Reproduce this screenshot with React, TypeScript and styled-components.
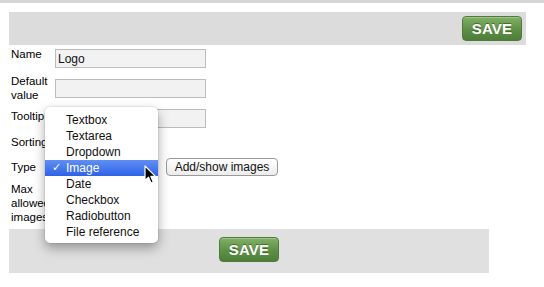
import React from "react";
import styled, {createGlobalStyle} from "styled-components";

const GlobalStyle = createGlobalStyle`
  body {
    margin: 0;
    background: #fff;
    font-family: "Liberation Sans", Arial, sans-serif;
    color: #111;
  }
`

const Page = styled.div`
  width: 544px;
  height: 287px;
  overflow: hidden;
`

const TopStrip = styled.div`
  height: 3px;
  background: #d6d6d6;
`

const Panel = styled.div<{ $width: number, $height: number, $justify: string, $bg: string }>`
  display: flex;
  align-items: center;
  justify-content: ${({$justify}) => $justify};
  box-sizing: border-box;
  margin-left: 9px;
  width: ${({$width}) => $width}px;
  height: ${({$height}) => $height}px;
  background: ${({$bg}) => $bg};
`

const TopPanel = styled(Panel)`
  margin-top: 9px;
  padding-right: 4px;
`

const BottomPanel = styled(Panel)`
  margin-top: 5px;
  align-items: flex-start;
  padding-top: 8px;
`

const SaveButton = styled.button`
  width: 60px;
  height: 25px;
  padding: 0;
  border: 1px solid #4f7a3c;
  border-radius: 4px;
  background: linear-gradient(#82b067, #5d9045 55%, #4e7e39);
  box-shadow: inset 0 1px 0 rgba(255, 255, 255, 0.25);
  color: #fff;
  font-family: "Liberation Sans", Arial, sans-serif;
  font-weight: bold;
  font-size: 15px;
  letter-spacing: 0.2px;
  text-shadow: 0 -1px 0 rgba(0, 0, 0, 0.35);
  cursor: pointer;
`

const Form = styled.div`
  padding: 2px 0 0 11px;
`

const Row = styled.div<{ $height: number }>`
  position: relative;
  display: flex;
  align-items: flex-start;
  height: ${({$height}) => $height}px;
`

const Label = styled.div`
  width: 44px;
  flex: none;
  font-size: 11.5px;
  line-height: 14px;
  color: #000;
`

const TextInput = styled.input<{ $top: number, $width?: number }>`
  box-sizing: border-box;
  margin: ${({$top}) => $top}px 0 0 0;
  width: ${({$width}) => $width ?? 151}px;
  height: 19px;
  padding: 1px 2px;
  border: 1px solid #bcbcbc;
  background: #f2f2f2;
  font-family: "Liberation Sans", Arial, sans-serif;
  font-size: 12px;
  color: #111;
  outline: none;
`

const SelectBox = styled.div`
  width: 100px;
  height: 18px;
  flex: none;
`

const PlainButton = styled.button`
  box-sizing: border-box;
  margin: -2px 0 0 11px;
  width: 112px;
  height: 18px;
  padding: 0;
  border: 1px solid #9a9a9a;
  border-radius: 4px;
  background: linear-gradient(#ffffff, #ececec);
  font-family: "Liberation Sans", Arial, sans-serif;
  font-size: 12px;
  color: #111;
`

const Menu = styled.ul`
  position: absolute;
  left: 34px;
  top: -53px;
  width: 113px;
  margin: 0;
  padding: 5px 0 3px;
  list-style: none;
  background: #fff;
  border-radius: 5px;
  box-shadow: 0 0 0 1px rgba(0, 0, 0, 0.06), 0 5px 12px rgba(0, 0, 0, 0.35);
  z-index: 2;
`

const MenuItem = styled.li<{ $active?: boolean }>`
  position: relative;
  height: 16px;
  padding-left: 21px;
  font-size: 12px;
  line-height: 16px;
  color: ${({$active}) => $active ? "#fff" : "#111"};
  background: ${({$active}) => $active ? "linear-gradient(#5f8ff3, #2f63e6)" : "transparent"};
`

const Check = styled.span`
  position: absolute;
  left: 7px;
  top: 0;
  font-size: 11px;
  font-weight: bold;
  font-family: "DejaVu Sans", sans-serif;
  color: #fff;
`

const Cursor = styled.svg`
  position: absolute;
  left: 133px;
  top: 5px;
  z-index: 3;
`

const types = ["Textbox", "Textarea", "Dropdown", "Image", "Date", "Checkbox", "Radiobutton", "File reference"];

export default function App() {
    return (
        <Page>
            <GlobalStyle/>
            <TopStrip/>
            <TopPanel $width={517} $height={33} $justify="flex-end" $bg="#dcdcdc">
                <SaveButton>SAVE</SaveButton>
            </TopPanel>
            <Form>
                <Row $height={27}>
                    <Label>Name</Label>
                    <TextInput $top={2} defaultValue="Logo"/>
                </Row>
                <Row $height={35}>
                    <Label>Default<br/>value</Label>
                    <TextInput $top={5}/>
                </Row>
                <Row $height={26}>
                    <Label>Tooltip</Label>
                    <TextInput $top={0}/>
                </Row>
                <Row $height={25}>
                    <Label>Sorting</Label>
                    <TextInput $top={0} $width={40}/>
                </Row>
                <Row $height={22}>
                    <Label>Type</Label>
                    <SelectBox/>
                    <PlainButton>Add/show images</PlainButton>
                    <Menu>
                        {types.map(t => (
                            <MenuItem key={t} $active={t === "Image"}>
                                {t === "Image" && <Check>✓</Check>}
                                {t}
                            </MenuItem>
                        ))}
                    </Menu>
                    <Cursor width="13" height="20" viewBox="0 0 13 20">
                        <path d="M1 1 L1 15.5 L4.5 12.2 L7 18 L9.3 17 L6.9 11.4 L11.5 11.4 Z"
                              fill="#000" stroke="#fff" strokeWidth="1.2" strokeLinejoin="round"/>
                    </Cursor>
                </Row>
                <Row $height={42}>
                    <Label>Max<br/>allowed<br/>images</Label>
                </Row>
            </Form>
            <BottomPanel $width={480} $height={44} $justify="center" $bg="#e0e0e0">
                <SaveButton>SAVE</SaveButton>
            </BottomPanel>
        </Page>
    );
}
